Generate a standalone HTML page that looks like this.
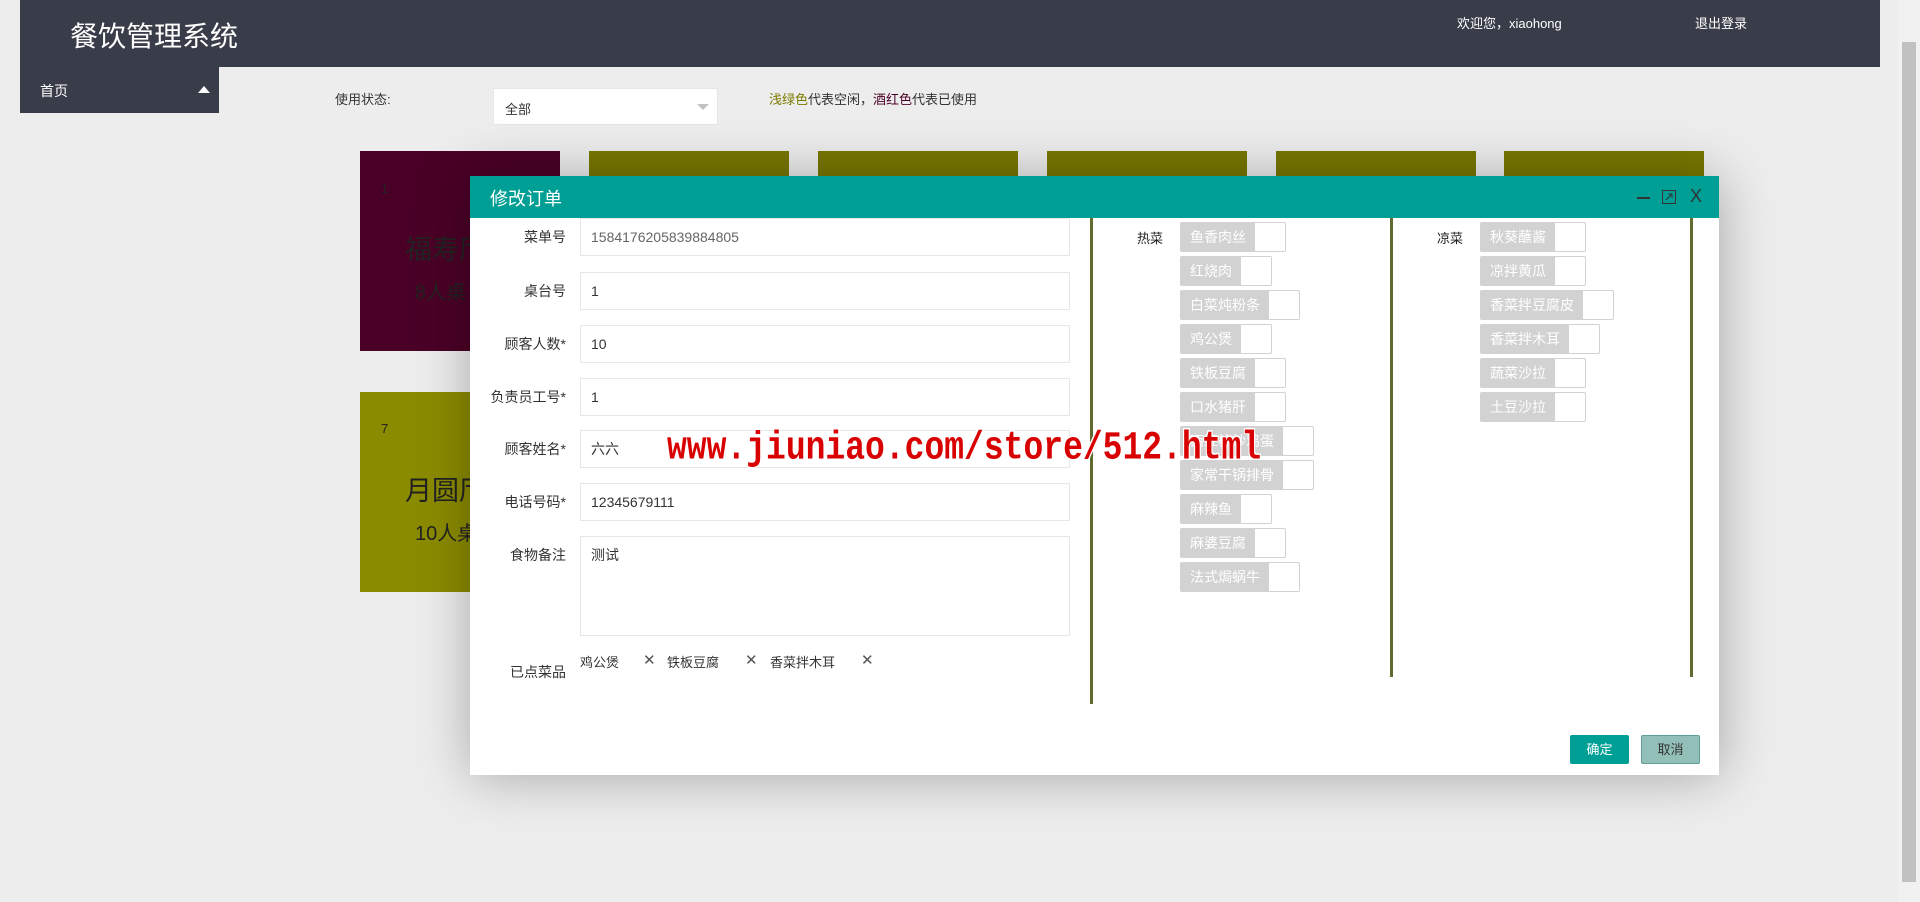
<!DOCTYPE html>
<html><head><meta charset="utf-8"><style>
*{box-sizing:border-box;margin:0;padding:0}
body{width:1920px;height:902px;background:#ededed;font-family:"Liberation Sans","Noto Sans CJK SC",sans-serif;position:relative;overflow:hidden;font-size:14px;color:#333}
.a{position:absolute}
.hdr{left:20px;top:0;width:1860px;height:67px;background:#393d49}
.card{position:absolute;width:200px;height:200px}
.lbl{position:absolute;right:1153px;width:110px;text-align:right;font-size:14px;color:#333}
.inp{position:absolute;left:580px;width:490px;height:38px;background:#fff;border:1px solid #e6e6e6;padding-left:10px;line-height:36px;font-size:14px;color:#333}
.dish{position:absolute;height:30px;display:flex;border:1px solid #d2d2d2;border-radius:2px;background:#fff}
.dish span{background:#d2d2d2;color:#fff;font-size:14px;line-height:28px;padding:0 9px}
.dish i{width:30px;display:block}
.vl{position:absolute;width:3px;background:#5f6b2f;top:218px}
</style></head><body>
<div class="a hdr"></div>
<div class="a" style="left:70px;top:15px;font-size:28px;color:#fff">餐饮管理系统</div>
<div class="a" style="left:1457px;top:13px;font-size:13px;color:#fff">欢迎您，xiaohong</div>
<div class="a" style="left:1695px;top:13px;font-size:13px;color:#fff">退出登录</div>
<div class="a" style="left:1898px;top:0;width:22px;height:902px;background:#f1f1f1"></div>
<div class="a" style="left:1902px;top:42px;width:14px;height:840px;background:#c1c1c1"></div>
<div class="a" style="left:20px;top:67px;width:199px;height:46px;background:#393d49"></div>
<div class="a" style="left:40px;top:81px;font-size:14px;color:#fff">首页</div>
<div class="a" style="left:198px;top:86px;width:0;height:0;border-left:6px solid transparent;border-right:6px solid transparent;border-bottom:7px solid #fff"></div>
<div class="a" style="left:335px;top:89px;font-size:13px">使用状态:</div>
<div class="a" style="left:493px;top:88px;width:225px;height:37px;background:#fff;border:1px solid #e6e6e6"></div>
<div class="a" style="left:505px;top:99px;font-size:13px">全部</div>
<div class="a" style="left:697px;top:104px;border-left:6px solid transparent;border-right:6px solid transparent;border-top:6px solid #c2c2c2"></div>
<div class="a" style="left:769px;top:89px;font-size:13px"><span style="color:#7a7a00">浅绿色</span>代表空闲，<span style="color:#4a0026">酒红色</span>代表已使用</div>
<div class="card" style="left:360px;top:151px;background:#4a0026"></div>
<div class="card" style="left:589px;top:151px;background:#787800"></div>
<div class="card" style="left:818px;top:151px;background:#787800"></div>
<div class="card" style="left:1047px;top:151px;background:#787800"></div>
<div class="card" style="left:1276px;top:151px;background:#787800"></div>
<div class="card" style="left:1504px;top:151px;background:#787800"></div>
<div class="a" style="left:381px;top:181px;font-size:13px;color:#222">1</div>
<div class="a" style="left:405px;top:228px;font-size:27px;color:#222">福寿厅</div>
<div class="a" style="left:415px;top:276px;font-size:20px;color:#222">8人桌</div>
<div class="card" style="left:360px;top:392px;background:#8b8b00"></div>
<div class="a" style="left:381px;top:421px;font-size:13px;color:#222">7</div>
<div class="a" style="left:405px;top:469px;font-size:27px;color:#222">月圆厅</div>
<div class="a" style="left:415px;top:517px;font-size:20px;color:#222">10人桌</div>

<div class="a" style="left:470px;top:176px;width:1249px;height:599px;background:#fff;box-shadow:1px 1px 50px rgba(0,0,0,.3)"></div>
<div class="a" style="left:470px;top:176px;width:1249px;height:42px;background:#009f95"></div>
<div class="a" style="left:490px;top:185px;font-size:18px;color:#fff">修改订单</div>
<div class="a" style="left:1637px;top:197px;width:13px;height:2px;background:#333"></div>
<svg class="a" style="left:1662px;top:190px" width="14" height="14" viewBox="0 0 14 14" fill="none" stroke="#333" stroke-width="1"><rect x="0.5" y="0.5" width="13" height="13"/><path d="M4 10L10 4M6 4h4v4"/></svg>
<div class="a" style="left:1690px;top:186px;font-size:18px;color:#333">X</div>

<div class="inp" style="top:218px;color:#666">1584176205839884805</div>
<div class="inp" style="top:272px">1</div>
<div class="inp" style="top:325px">10</div>
<div class="inp" style="top:378px">1</div>
<div class="inp" style="top:430px">六六</div>
<div class="inp" style="top:483px">12345679111</div>
<div class="inp" style="top:536px;height:100px;line-height:20px;padding-top:8px">测试</div>
<div class="lbl" style="left:456px;top:227px">菜单号</div>
<div class="lbl" style="left:456px;top:281px">桌台号</div>
<div class="lbl" style="left:456px;top:334px">顾客人数*</div>
<div class="lbl" style="left:456px;top:387px">负责员工号*</div>
<div class="lbl" style="left:456px;top:439px">顾客姓名*</div>
<div class="lbl" style="left:456px;top:492px">电话号码*</div>
<div class="lbl" style="left:456px;top:545px">食物备注</div>
<div class="lbl" style="left:456px;top:662px">已点菜品</div>
<div class="a" style="left:580px;top:652px;font-size:13px">鸡公煲</div>
<div class="a" style="left:643px;top:651px;font-size:15px;color:#555">✕</div>
<div class="a" style="left:667px;top:652px;font-size:13px">铁板豆腐</div>
<div class="a" style="left:745px;top:651px;font-size:15px;color:#555">✕</div>
<div class="a" style="left:770px;top:652px;font-size:13px">香菜拌木耳</div>
<div class="a" style="left:861px;top:651px;font-size:15px;color:#555">✕</div>

<div class="vl" style="left:1090px;height:486px"></div>
<div class="vl" style="left:1390px;height:459px"></div>
<div class="vl" style="left:1690px;height:459px"></div>
<div class="a" style="left:1137px;top:228px;font-size:13px;color:#222">热菜</div>
<div class="a" style="left:1437px;top:228px;font-size:13px;color:#222">凉菜</div>
<div class="dish" style="left:1180px;top:222px"><span>鱼香肉丝</span><i></i></div>
<div class="dish" style="left:1180px;top:256px"><span>红烧肉</span><i></i></div>
<div class="dish" style="left:1180px;top:290px"><span>白菜炖粉条</span><i></i></div>
<div class="dish" style="left:1180px;top:324px"><span>鸡公煲</span><i></i></div>
<div class="dish" style="left:1180px;top:358px"><span>铁板豆腐</span><i></i></div>
<div class="dish" style="left:1180px;top:392px"><span>口水猪肝</span><i></i></div>
<div class="dish" style="left:1180px;top:426px"><span>西红柿炒鸡蛋</span><i></i></div>
<div class="dish" style="left:1180px;top:460px"><span>家常干锅排骨</span><i></i></div>
<div class="dish" style="left:1180px;top:494px"><span>麻辣鱼</span><i></i></div>
<div class="dish" style="left:1180px;top:528px"><span>麻婆豆腐</span><i></i></div>
<div class="dish" style="left:1180px;top:562px"><span>法式焗蜗牛</span><i></i></div>
<div class="dish" style="left:1480px;top:222px"><span>秋葵蘸酱</span><i></i></div>
<div class="dish" style="left:1480px;top:256px"><span>凉拌黄瓜</span><i></i></div>
<div class="dish" style="left:1480px;top:290px"><span>香菜拌豆腐皮</span><i></i></div>
<div class="dish" style="left:1480px;top:324px"><span>香菜拌木耳</span><i></i></div>
<div class="dish" style="left:1480px;top:358px"><span>蔬菜沙拉</span><i></i></div>
<div class="dish" style="left:1480px;top:392px"><span>土豆沙拉</span><i></i></div>

<div class="a" style="left:1570px;top:735px;width:59px;height:29px;background:#009f95;border-radius:2px;color:#fff;font-size:13px;text-align:center;line-height:29px">确定</div>
<div class="a" style="left:1641px;top:735px;width:59px;height:29px;background:#92bfb7;border:1px solid #5fa198;border-radius:2px;color:#333;font-size:13px;text-align:center;line-height:27px">取消</div>

<div class="a" style="left:667px;top:426px;font-family:'Liberation Mono',monospace;font-weight:bold;font-size:33px;transform:scaleY(1.2);transform-origin:left top;color:#d80000;text-shadow:1px 1px 0 #fff,-1px -1px 0 #fff,1px -1px 0 #fff,-1px 1px 0 #fff;white-space:nowrap">www.jiuniao.com/store/512.html</div>
</body></html>
